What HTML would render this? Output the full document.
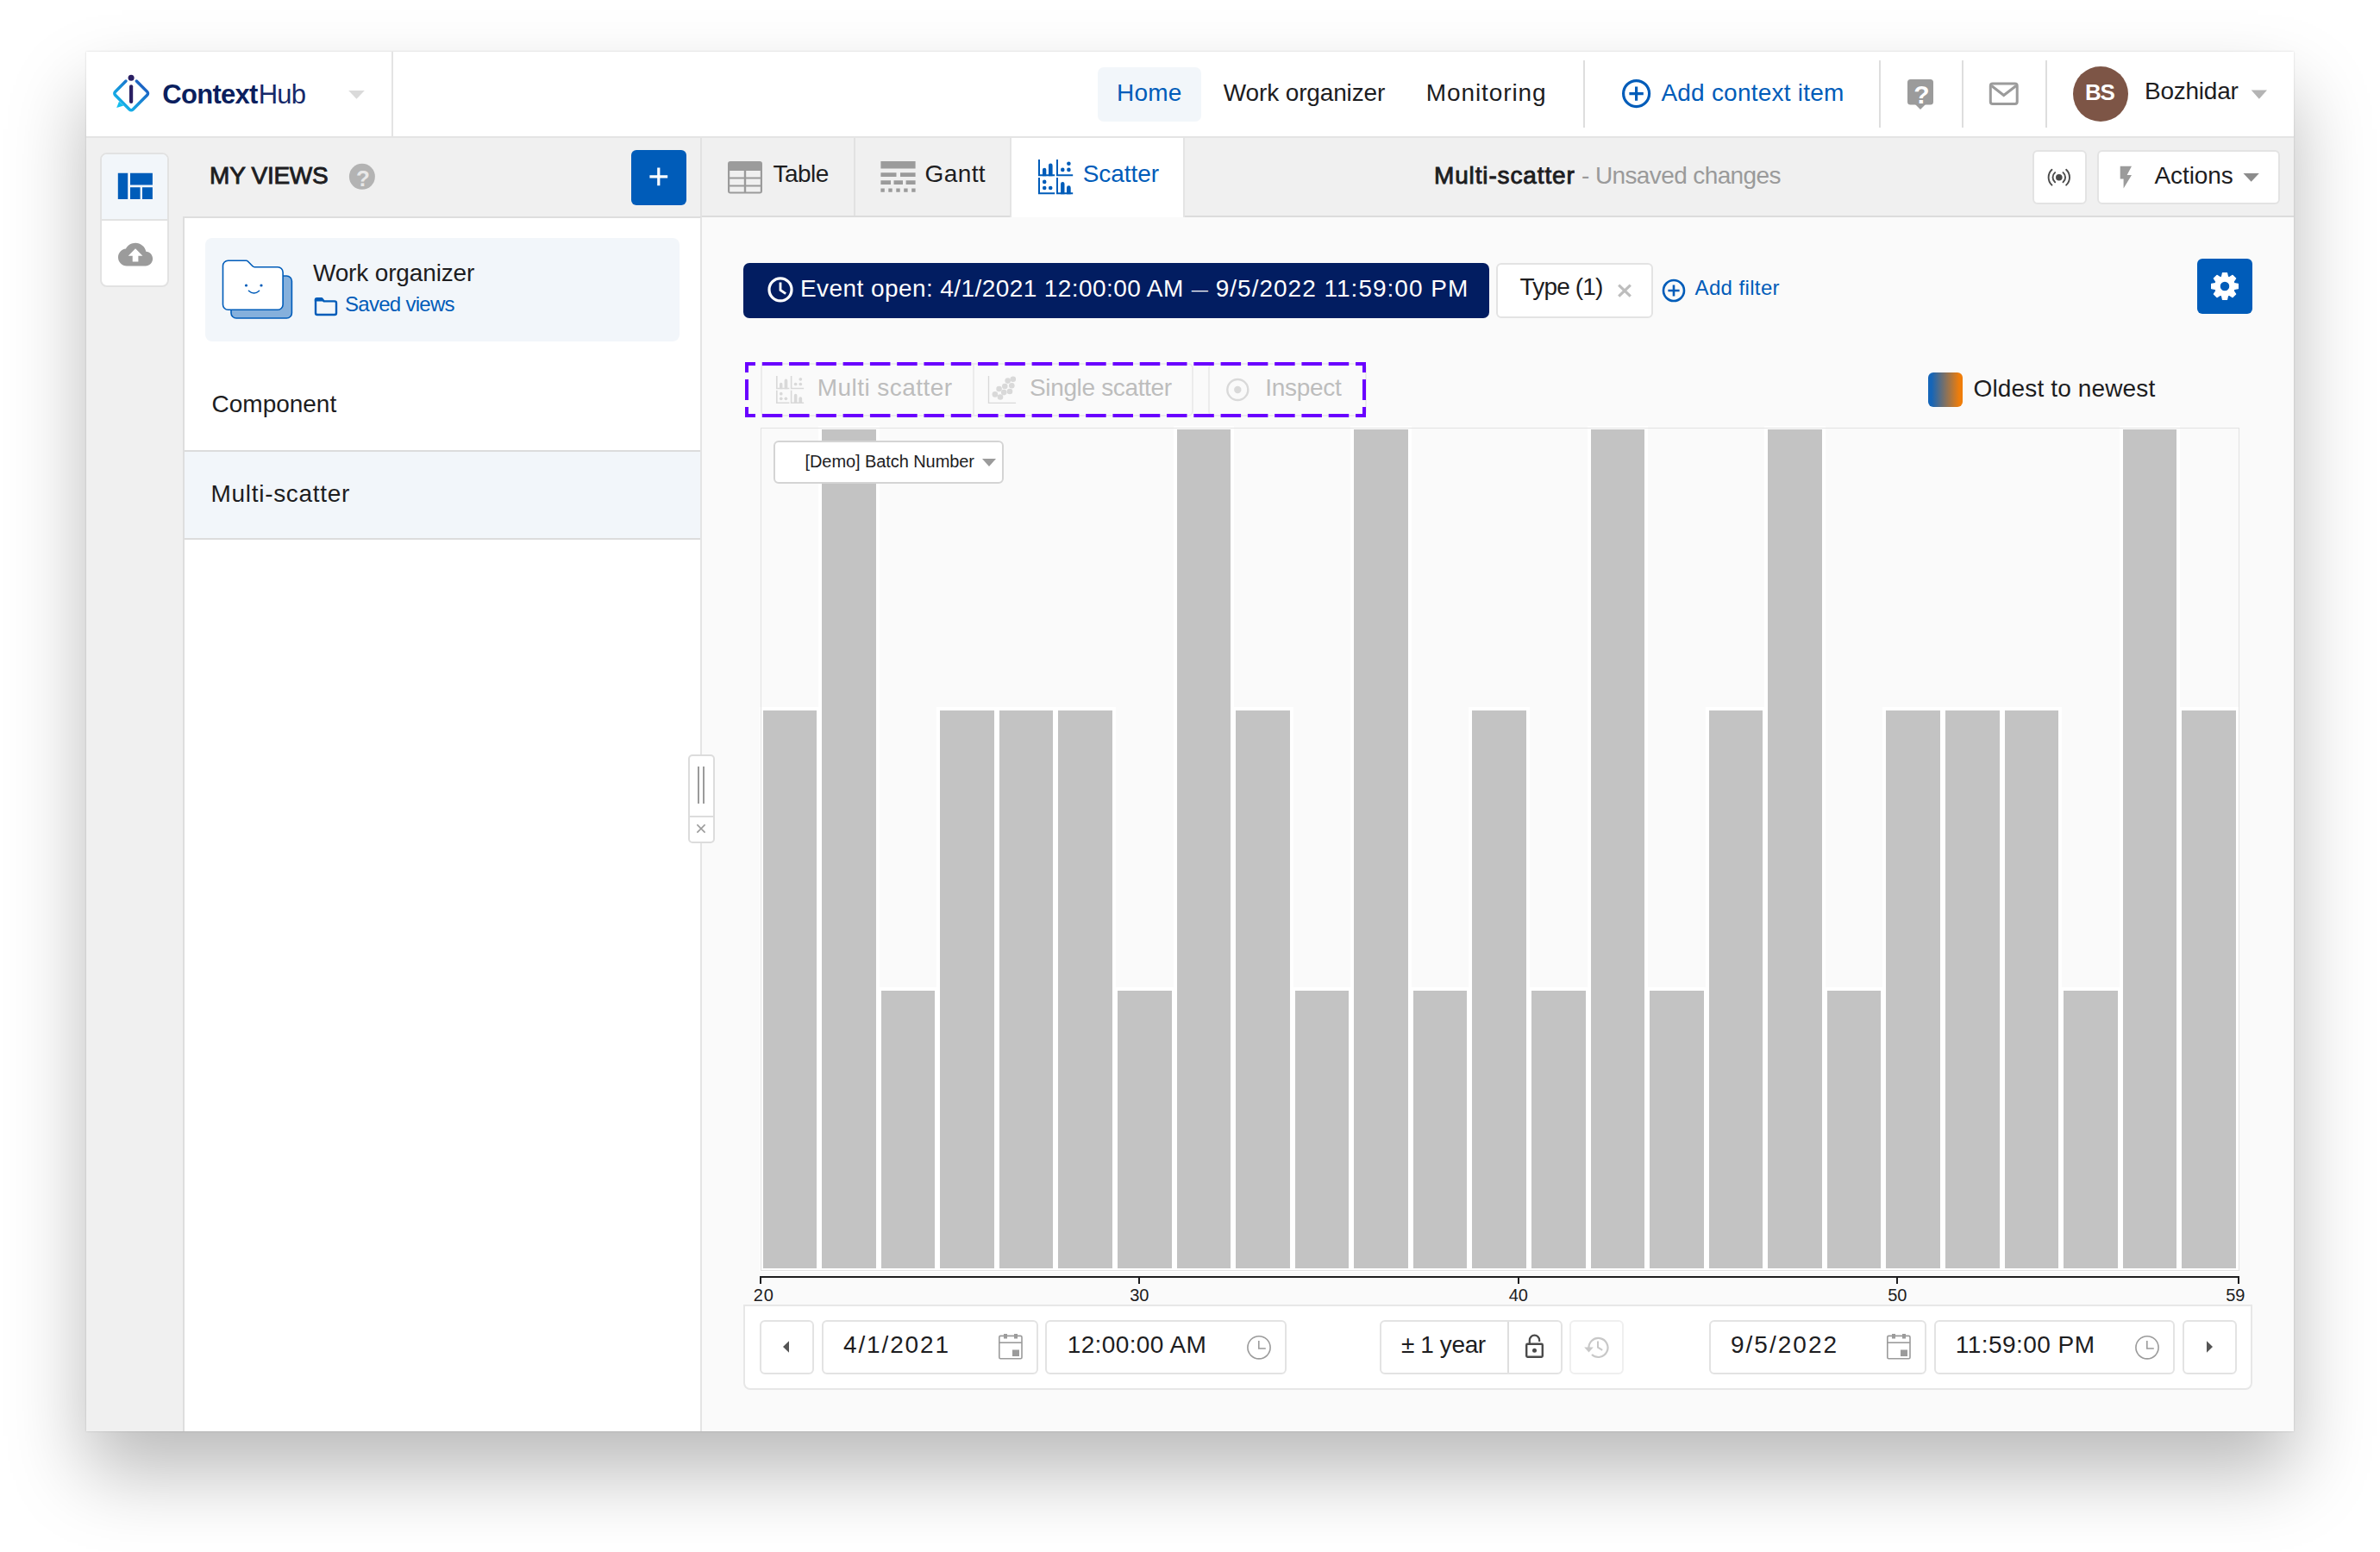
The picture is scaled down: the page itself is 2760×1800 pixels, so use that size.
<!DOCTYPE html>
<html lang="en"><head><meta charset="utf-8"><title>ContextHub - Multi-scatter</title>
<style>
html,body{margin:0;padding:0}
body{width:2760px;height:1800px;position:relative;overflow:hidden;background:#fff;font-family:"Liberation Sans",sans-serif;color:#1d1d1f}
.t{position:absolute;white-space:nowrap;line-height:1;z-index:5}
.a{position:absolute;box-sizing:border-box}
svg{position:absolute;overflow:visible}
.win{left:100px;top:60px;width:2560px;height:1600px;background:#f0f0f0;box-shadow:0 48px 84px rgba(0,0,0,.27),0 0 2px rgba(0,0,0,.16)}
.vd{width:2px;background:#dedede}
.btn{background:#fff;border:2px solid #e3e3e3;border-radius:6px}
.bar{background:#c3c3c3;outline:4px solid #fff}

</style></head>
<body>
<div class="a win"></div>
<!-- header -->
<div class="a" style="left:100px;top:60px;width:2560px;height:98px;background:#fff"></div>
<div class="a" style="left:100px;top:158px;width:2560px;height:2px;background:#e4e4e4"></div>
<div class="a vd" style="left:454px;top:60px;height:98px;background:#e4e4e4"></div>
<div class="a" style="left:1273px;top:78px;width:120px;height:63px;background:#f2f6fa;border-radius:7px"></div>
<div class="a vd" style="left:1836px;top:70px;height:78px"></div>
<div class="a vd" style="left:2179px;top:70px;height:78px"></div>
<div class="a vd" style="left:2275px;top:70px;height:78px"></div>
<div class="a vd" style="left:2372px;top:70px;height:78px"></div>
<div class="a" style="left:2404px;top:77px;width:64px;height:64px;border-radius:50%;background:#7d5546"></div>
<!-- toolbar row -->
<div class="a" style="left:812px;top:250px;width:1848px;height:2px;background:#dcdcdc"></div>
<div class="a vd" style="left:812px;top:160px;height:92px;background:#e2e2e2"></div>
<div class="a vd" style="left:990px;top:160px;height:90px;background:#e2e2e2"></div>
<div class="a" style="left:1171px;top:160px;width:203.4px;height:92px;background:#fff;border-left:2px solid #e4e4e4;border-right:2px solid #e4e4e4"></div>
<div class="a btn" style="left:2357px;top:174px;width:63px;height:63px"></div>
<div class="a btn" style="left:2432px;top:174px;width:212px;height:63px"></div>
<!-- icon rail -->
<div class="a" style="left:116px;top:177px;width:80px;height:156px;background:#fff;border:2px solid #e2e2e2;border-radius:8px;overflow:hidden"><div style="height:75px;background:#f2f6fa;border-bottom:2px solid #e2e2e2"></div></div>
<!-- left panel -->
<div class="a" style="left:212px;top:250.5px;width:602px;height:1409.5px;background:#fff;border-left:2px solid #dedede;border-top:2px solid #dedede;border-right:2px solid #e4e4e4"></div>
<div class="a" style="left:732px;top:173.5px;width:64px;height:64px;background:#005cb9;border-radius:6px"></div>
<div class="a" style="left:238px;top:276px;width:550px;height:120px;background:#f2f6fa;border-radius:8px"></div>
<div class="a" style="left:214px;top:522px;width:598px;height:104px;background:#f2f6fa;border-top:2px solid #dcdcdc;border-bottom:2px solid #dcdcdc"></div>
<!-- main area -->
<div class="a" style="left:814px;top:252px;width:1846px;height:1408px;background:#fafafa"></div>
<div class="a" style="left:862px;top:305px;width:865px;height:64px;background:#021d61;border-radius:7px"></div>
<div class="a btn" style="left:1735px;top:305px;width:182px;height:64px"></div>
<div class="a" style="left:2548px;top:300px;width:64px;height:64px;background:#005cb9;border-radius:6px"></div>
<div class="a" style="left:2236px;top:432px;width:40px;height:40px;border-radius:6px;background:linear-gradient(90deg,#1565b8 10%,#ef7d0a 90%)"></div>
<!-- mode buttons (disabled) -->
<div class="a" style="left:882px;top:421px;width:502px;height:62px;border:2px solid #ececec;border-radius:6px;background:#fafafa"></div>
<div class="a vd" style="left:1128px;top:421px;height:62px;background:#ececec"></div>
<div class="a" style="left:1400.5px;top:421px;width:184px;height:62px;border:2px solid #ececec;border-radius:6px"></div>
<svg style="left:860px;top:416px" width="728" height="72" viewBox="860 416 728 72"><g stroke="#6a00ff" stroke-width="4" fill="none"><path d="M864 422H1584M864 482H1584" stroke-dasharray="23.5 7.783" stroke-dashoffset="11.5"/><path d="M866 420V484M1582 420V484" stroke-dasharray="24 8" stroke-dashoffset="12"/></g></svg>
<!-- chart -->
<div class="a bar" style="left:884.5px;top:823.5px;width:62.6px;height:647.1px"></div>
<div class="a bar" style="left:953.1px;top:498.3px;width:62.6px;height:972.3px"></div>
<div class="a bar" style="left:1021.6px;top:1149.0px;width:62.6px;height:321.6px"></div>
<div class="a bar" style="left:1090.2px;top:823.5px;width:62.6px;height:647.1px"></div>
<div class="a bar" style="left:1158.8px;top:823.5px;width:62.6px;height:647.1px"></div>
<div class="a bar" style="left:1227.4px;top:823.5px;width:62.6px;height:647.1px"></div>
<div class="a bar" style="left:1296.0px;top:1149.0px;width:62.6px;height:321.6px"></div>
<div class="a bar" style="left:1364.5px;top:498.3px;width:62.6px;height:972.3px"></div>
<div class="a bar" style="left:1433.1px;top:823.5px;width:62.6px;height:647.1px"></div>
<div class="a bar" style="left:1501.7px;top:1149.0px;width:62.6px;height:321.6px"></div>
<div class="a bar" style="left:1570.2px;top:498.3px;width:62.6px;height:972.3px"></div>
<div class="a bar" style="left:1638.8px;top:1149.0px;width:62.6px;height:321.6px"></div>
<div class="a bar" style="left:1707.4px;top:823.5px;width:62.6px;height:647.1px"></div>
<div class="a bar" style="left:1776.0px;top:1149.0px;width:62.6px;height:321.6px"></div>
<div class="a bar" style="left:1844.6px;top:498.3px;width:62.6px;height:972.3px"></div>
<div class="a bar" style="left:1913.1px;top:1149.0px;width:62.6px;height:321.6px"></div>
<div class="a bar" style="left:1981.7px;top:823.5px;width:62.6px;height:647.1px"></div>
<div class="a bar" style="left:2050.3px;top:498.3px;width:62.6px;height:972.3px"></div>
<div class="a bar" style="left:2118.9px;top:1149.0px;width:62.6px;height:321.6px"></div>
<div class="a bar" style="left:2187.4px;top:823.5px;width:62.6px;height:647.1px"></div>
<div class="a bar" style="left:2256.0px;top:823.5px;width:62.6px;height:647.1px"></div>
<div class="a bar" style="left:2324.6px;top:823.5px;width:62.6px;height:647.1px"></div>
<div class="a bar" style="left:2393.2px;top:1149.0px;width:62.6px;height:321.6px"></div>
<div class="a bar" style="left:2461.7px;top:498.3px;width:62.6px;height:972.3px"></div>
<div class="a bar" style="left:2530.3px;top:823.5px;width:62.6px;height:647.1px"></div>
<div class="a" style="left:880.7px;top:1480px;width:2.2px;height:8.5px;background:#1d1d1f"></div>
<div class="a" style="left:1320.2px;top:1480px;width:2.2px;height:8.5px;background:#1d1d1f"></div>
<div class="a" style="left:1759.7px;top:1480px;width:2.2px;height:8.5px;background:#1d1d1f"></div>
<div class="a" style="left:2199.2px;top:1480px;width:2.2px;height:8.5px;background:#1d1d1f"></div>
<div class="a" style="left:2594.8px;top:1480px;width:2.2px;height:8.5px;background:#1d1d1f"></div>
<div class="a" style="left:882px;top:496px;width:1714.5px;height:977.5px;border:1.6px solid #e2e2e2"></div>
<div class="a" style="left:897px;top:511px;width:267px;height:50px;background:#fff;border:2px solid #d4d4d4;border-radius:6px"></div>
<svg style="left:1139px;top:532px" width="16" height="9"><path d="M0 0h16l-8 9z" fill="#9b9b9b"/></svg>
<div class="a" style="left:880.7px;top:1480px;width:1716.3px;height:2.2px;background:#1d1d1f"></div>
<!-- time bar -->
<div class="a btn" style="left:862px;top:1513px;width:1750px;height:99px;border-color:#e7e7e7;border-radius:0 0 8px 8px"></div>
<div class="a btn" style="left:881px;top:1531px;width:63px;height:63px"></div>
<div class="a btn" style="left:953px;top:1531px;width:251px;height:63px"></div>
<div class="a btn" style="left:1212px;top:1531px;width:280px;height:63px"></div>
<div class="a btn" style="left:1600px;top:1531px;width:212px;height:63px"></div>
<div class="a vd" style="left:1748px;top:1533px;height:59px"></div>
<div class="a btn" style="left:1820px;top:1531px;width:63px;height:63px;border-color:#efefef"></div>
<div class="a btn" style="left:1982px;top:1531px;width:252px;height:63px"></div>
<div class="a btn" style="left:2243px;top:1531px;width:279px;height:63px"></div>
<div class="a btn" style="left:2531px;top:1531px;width:63px;height:63px"></div>
<!-- resize handle -->
<div class="a" style="left:798px;top:875px;width:31px;height:103px;background:#fff;border:2px solid #dcdcdc;border-radius:5px"></div>
<div class="a" style="left:800px;top:946px;width:27px;height:2px;background:#dcdcdc"></div>
<div class="a" style="left:809px;top:889px;width:2px;height:43px;background:#9b9b9b"></div>
<div class="a" style="left:815px;top:889px;width:2px;height:43px;background:#9b9b9b"></div>
<svg style="left:126px;top:82px" width="52" height="52" viewBox="126 82 52 52"><defs><linearGradient id="lg" x1="0" y1="1" x2="1" y2="0"><stop offset="0.1" stop-color="#14bdee"/><stop offset="0.9" stop-color="#1c5cc0"/></linearGradient></defs>
<path d="M146 94 L133.6 106.4 a2.8 2.8 0 0 0 0 3.9 L150.2 126.9 a2.8 2.8 0 0 0 3.9 0 L170.7 110.3 a2.8 2.8 0 0 0 0 -3.9 L158.3 94" stroke="url(#lg)" stroke-width="3.5" fill="none" stroke-linecap="round"/>
<path d="M138 117.8 L135.2 124.9 L143.4 122.6z" fill="#14bdee"/>
<circle cx="152.1" cy="90.2" r="3.5" fill="#2a1f63"/>
<path d="M152.1 100.3V118" stroke="#2a1f63" stroke-width="4.2" stroke-linecap="round"/></svg>
<svg style="left:404px;top:105px" width="19" height="10" viewBox="404 105 19 10"><path d="M404.2 105h18.6l-9.3 9.8z" fill="#dadada"/></svg>
<svg style="left:1880px;top:91px" width="36" height="36" viewBox="1880 91 36 36"><circle cx="1897.6" cy="108.6" r="15" fill="none" stroke="#005cb9" stroke-width="3.2"/><path d="M1889.4 108.6h16.4M1897.6 100.4v16.4" stroke="#005cb9" stroke-width="3.2"/></svg>
<svg style="left:2210px;top:90px" width="34" height="40" viewBox="2210 90 34 40"><rect x="2212" y="92" width="30" height="29.5" rx="3.5" fill="#9b9b9b"/><path d="M2221 121h12l-6 6z" fill="#9b9b9b"/></svg>
<svg style="left:2305px;top:94px" width="38" height="30" viewBox="2305 94 38 30"><rect x="2308.3" y="97.1" width="30.9" height="23.3" rx="2.5" fill="none" stroke="#9b9b9b" stroke-width="3"/><path d="M2309.5 99.5L2323.7 110.5L2338 99.5" fill="none" stroke="#9b9b9b" stroke-width="3"/></svg>
<svg style="left:2610px;top:104px" width="20" height="11" viewBox="2610 104 20 11"><path d="M2610.7 104.6h18.3l-9.15 10.2z" fill="#b4b4b4"/></svg>
<svg style="left:136px;top:200px" width="42" height="32" viewBox="136 200 42 32"><path d="M136.8 200.8h11.4v30.2h-11.4zM151 200.8h25.9v13.6h-25.9zM151 217.2h11.6v13.8h-11.6zM165 217.2h11.9v13.8h-11.9z" fill="#005cb9"/></svg>
<svg style="left:136.8px;top:274.7px" width="40.1" height="40.1" viewBox="0 0 24 24"><path d="M19.35 10.04C18.67 6.59 15.64 4 12 4 9.11 4 6.6 5.64 5.35 8.04 2.34 8.36 0 10.91 0 14c0 3.31 2.69 6 6 6h13c2.76 0 5-2.24 5-5 0-2.64-2.05-4.78-4.65-4.96zM14 13v4h-4v-4H7l5-5 5 5h-3z" fill="#9b9b9b"/></svg>
<svg style="left:404px;top:189px" width="32" height="32" viewBox="404 189 32 32"><circle cx="419.9" cy="204.8" r="15" fill="#b3b3b3"/></svg>
<svg style="left:750px;top:191px" width="28" height="28" viewBox="750 191 28 28"><path d="M753.4 204.9h20.8M763.8 194.5v20.8" stroke="#fff" stroke-width="3.2"/></svg>
<svg style="left:844px;top:187px" width="40" height="38" viewBox="844 187 40 38"><rect x="844" y="187" width="40" height="37.5" rx="3" fill="#9b9b9b"/><path d="M846.2 198h16.6v7.4h-16.6zM865.2 198h16.6v7.4h-16.6zM846.2 207.4h16.6v7.2h-16.6zM865.2 207.4h16.6v7.2h-16.6zM846.2 216.6h16.6v5.8h-16.6zM865.2 216.6h16.6v5.8h-16.6z" fill="#f0f0f0"/></svg>
<svg style="left:1021px;top:186px" width="41" height="38" viewBox="1021 186 41 38"><path d="M1021.4 186.9h40.2v8.7h-40.2zM1021.4 200.3h18.1v4.7h-18.1zM1044 200.3h17.6v4.7h-17.6zM1021.4 209.2h11.6v4.8h-11.6zM1036.5 209.2h10.5v4.8h-10.5zM1050.6 209.2h11v4.8h-11zM1021.4 218.4h4.4v4.3h-4.4zM1030.3 218.4h4.4v4.3h-4.4zM1039.3 218.4h4.4v4.3h-4.4zM1048.2 218.4h4.4v4.3h-4.4zM1057.2 218.4h4.4v4.3h-4.4z" fill="#9b9b9b"/></svg>
<svg style="left:1204px;top:184.8px" width="40" height="40.3" viewBox="0 0 40 40.3"><g fill="#005cb9" stroke="none"><path d="M0 0h2v17.2h17.2v2h-19.2z"/><path d="M21 0h2v17.2h17.2v2h-19.2z"/><path d="M0 21h2v17.2h17.2v2h-19.2z"/><path d="M21 21h2v17.2h17.2v2h-19.2z"/><path d="M5 19.2v-7.4a2.15 2.15 0 0 1 4.3 0v7.4zM12 19.2v-12.4a2.3 2.3 0 0 1 4.6 0v12.4z"/><circle cx="35.4" cy="4.8" r="2.3"/><circle cx="28.3" cy="11.9" r="2.3"/><circle cx="35.4" cy="11.9" r="2.3"/><circle cx="7.2" cy="25.9" r="2.3"/><circle cx="7.2" cy="33" r="2.3"/><circle cx="14.2" cy="33" r="2.3"/><path d="M26.1 40.2v-12.1a2.2 2.2 0 0 1 4.4 0v12.1zM33 40.2v-7.5a2.35 2.35 0 0 1 4.7 0v7.5z"/></g></svg>
<svg style="left:2372px;top:190px" width="32" height="32" viewBox="2372 190 32 32"><circle cx="2387.8" cy="205.7" r="3.8" fill="#4a4a4a"/><path d="M2392.49 200.11A7.3 7.3 0 0 1 2392.49 211.29M2383.11 211.29A7.3 7.3 0 0 1 2383.11 200.11M2396.12 196.78A12.2 12.2 0 0 1 2396.12 214.62M2379.48 214.62A12.2 12.2 0 0 1 2379.48 196.78" fill="none" stroke="#4a4a4a" stroke-width="1.9" stroke-linecap="round"/></svg>
<svg style="left:2458px;top:192px" width="15" height="27" viewBox="2458 192 15 27"><path d="M2458.7 192.7h13.3l-5.4 10.3h5.4l-9.4 15.5v-10.9h-3.9z" fill="#9b9b9b"/></svg>
<svg style="left:2601px;top:200px" width="20" height="11" viewBox="2601 200 20 11"><path d="M2601.5 200.9h18.3l-9.15 9.8z" fill="#8c8c8c"/></svg>
<svg style="left:256px;top:300px" width="86" height="72" viewBox="256 300 86 72"><path d="M274 320h58.4a6 6 0 0 1 6 6v37a6 6 0 0 1 -6 6h-58.4a6 6 0 0 1 -6 -6v-37a6 6 0 0 1 6 -6z" fill="#85b0dc" stroke="#005cb9" stroke-width="1.6"/>
<path d="M264.5 302.3h21a3 3 0 0 1 2.1 .9l5.4 5.6a3 3 0 0 0 2.1 .9h27a6 6 0 0 1 6 6v37.5a6 6 0 0 1 -6 6h-57.6a6 6 0 0 1 -6 -6v-45a6 6 0 0 1 6 -6z" fill="#fff" stroke="#005cb9" stroke-width="1.6"/>
<circle cx="285.5" cy="331" r="1.6" fill="#005cb9"/><circle cx="303" cy="331" r="1.6" fill="#005cb9"/>
<path d="M288.4 337.2q6.1 5.6 12.2 0" fill="none" stroke="#005cb9" stroke-width="1.5" stroke-linecap="round"/></svg>
<svg style="left:364px;top:344px" width="28" height="23" viewBox="364 344 28 23"><path d="M366 349.8v13.2a2 2 0 0 0 2 2h20a2 2 0 0 0 2 -2v-11.6a2 2 0 0 0 -2 -2h-12.2l-2.6-3.2h-6a1.6 1.6 0 0 0 -1.4 1.6z" fill="none" stroke="#005cb9" stroke-width="2.4" stroke-linejoin="round"/><path d="M365.6 346.2h8l2.4 3.4h-10.4z" fill="#005cb9"/></svg>
<svg style="left:888px;top:319px" width="34" height="34" viewBox="888 319 34 34"><circle cx="905" cy="335.9" r="13" fill="none" stroke="#fff" stroke-width="3.2"/><path d="M905 327.4v9l6.2 4.2" fill="none" stroke="#fff" stroke-width="2.8"/></svg>
<svg style="left:1875px;top:328px" width="18" height="18" viewBox="1875 328 18 18"><path d="M1877.2 330.6l13.6 13M1890.8 330.6l-13.6 13" stroke="#bdbdbd" stroke-width="3.2"/></svg>
<svg style="left:1926px;top:322px" width="30" height="30" viewBox="1926 322 30 30"><circle cx="1941" cy="337" r="12" fill="none" stroke="#005cb9" stroke-width="2.6"/><path d="M1934.4 337h13.2M1941 330.4v13.2" stroke="#005cb9" stroke-width="2.6"/></svg>
<svg style="left:2562px;top:314px" width="36" height="36" viewBox="2562 314 36 36"><path d="M2576.52 321.14L2577.44 316.61L2582.56 316.61L2583.48 321.14L2585.22 321.86L2589.07 319.31L2592.69 322.93L2590.14 326.78L2590.86 328.52L2595.39 329.44L2595.39 334.56L2590.86 335.48L2590.14 337.22L2592.69 341.07L2589.07 344.69L2585.22 342.14L2583.48 342.86L2582.56 347.39L2577.44 347.39L2576.52 342.86L2574.78 342.14L2570.93 344.69L2567.31 341.07L2569.86 337.22L2569.14 335.48L2564.61 334.56L2564.61 329.44L2569.14 328.52L2569.86 326.78L2567.31 322.93L2570.93 319.31L2574.78 321.86zM2574.1 332a5.9 5.9 0 1 0 11.8 0a5.9 5.9 0 1 0 -11.8 0z" fill="#fff" fill-rule="evenodd" stroke="#fff" stroke-width="1.2" stroke-linejoin="round"/></svg>
<svg style="left:900px;top:436px" width="32" height="32.2" viewBox="0 0 40 40.3"><g fill="#d9d9d9" stroke="none"><path d="M0 0h2v17.2h17.2v2h-19.2z"/><path d="M21 0h2v17.2h17.2v2h-19.2z"/><path d="M0 21h2v17.2h17.2v2h-19.2z"/><path d="M21 21h2v17.2h17.2v2h-19.2z"/><path d="M5 19.2v-7.4a2.15 2.15 0 0 1 4.3 0v7.4zM12 19.2v-12.4a2.3 2.3 0 0 1 4.6 0v12.4z"/><circle cx="35.4" cy="4.8" r="2.3"/><circle cx="28.3" cy="11.9" r="2.3"/><circle cx="35.4" cy="11.9" r="2.3"/><circle cx="7.2" cy="25.9" r="2.3"/><circle cx="7.2" cy="33" r="2.3"/><circle cx="14.2" cy="33" r="2.3"/><path d="M26.1 40.2v-12.1a2.2 2.2 0 0 1 4.4 0v12.1zM33 40.2v-7.5a2.35 2.35 0 0 1 4.7 0v7.5z"/></g></svg>
<svg style="left:1145px;top:435px" width="35" height="34" viewBox="1145 435 35 34"><path d="M1146.5 436v31.4h31.6" fill="none" stroke="#d9d9d9" stroke-width="1.4"/><circle cx="1174.8" cy="439.7" r="3.3" fill="#d9d9d9"/><circle cx="1168.7" cy="441.6" r="3.3" fill="#d9d9d9"/><circle cx="1173.3" cy="447.2" r="3.3" fill="#d9d9d9"/><circle cx="1165.3" cy="448" r="3.3" fill="#d9d9d9"/><circle cx="1158.6" cy="451" r="3.3" fill="#d9d9d9"/><circle cx="1171" cy="454" r="3.3" fill="#d9d9d9"/><circle cx="1164.2" cy="455.1" r="3.3" fill="#d9d9d9"/><circle cx="1153.9" cy="457.4" r="3.3" fill="#d9d9d9"/><circle cx="1160" cy="460.5" r="3.3" fill="#d9d9d9"/></svg>
<svg style="left:1420px;top:437px" width="30" height="30" viewBox="1420 437 30 30"><circle cx="1435.3" cy="452" r="12" fill="none" stroke="#d9d9d9" stroke-width="2.4"/><circle cx="1435.3" cy="452" r="4.2" fill="#d9d9d9"/></svg>
<svg style="left:907px;top:1555px" width="9" height="14" viewBox="907 1555 9 14"><path d="M915 1555.3v13.5l-7-6.75z" fill="#555"/></svg>
<svg style="left:2558px;top:1555px" width="9" height="14" viewBox="2558 1555 9 14"><path d="M2559 1555.3v13.5l7-6.75z" fill="#555"/></svg>
<svg style="left:1157px;top:1546px" width="30" height="32" viewBox="1157 1546 30 32"><rect x="1158.8" y="1549.4" width="26.2" height="26.4" rx="1.5" fill="none" stroke="#9b9b9b" stroke-width="1.6"/><path d="M1158.8 1557.2h26.2" stroke="#9b9b9b" stroke-width="1.6"/><path d="M1164 1547h4v5.6h-4zM1176 1547h4v5.6h-4zM1174 1565.5h8v7.4h-8z" fill="#9b9b9b"/></svg>
<svg style="left:2186.8px;top:1546px" width="30" height="32" viewBox="2186.8 1546 30 32"><rect x="2188.6000000000004" y="1549.4" width="26.2" height="26.4" rx="1.5" fill="none" stroke="#9b9b9b" stroke-width="1.6"/><path d="M2188.6000000000004 1557.2h26.2" stroke="#9b9b9b" stroke-width="1.6"/><path d="M2193.8 1547h4v5.6h-4zM2205.8 1547h4v5.6h-4zM2203.8 1565.5h8v7.4h-8z" fill="#9b9b9b"/></svg>
<svg style="left:1445px;top:1548px" width="30" height="30" viewBox="1445 1548 30 30"><circle cx="1460" cy="1562.8" r="13.1" fill="none" stroke="#9b9b9b" stroke-width="1.6"/><path d="M1459.8 1555v9h8" fill="none" stroke="#9b9b9b" stroke-width="1.6"/></svg>
<svg style="left:2474.7px;top:1548px" width="30" height="30" viewBox="2474.7 1548 30 30"><circle cx="2489.7" cy="1562.8" r="13.1" fill="none" stroke="#9b9b9b" stroke-width="1.6"/><path d="M2489.5 1555v9h8" fill="none" stroke="#9b9b9b" stroke-width="1.6"/></svg>
<svg style="left:1766px;top:1545px" width="28" height="32" viewBox="1766 1545 28 32"><rect x="1770.2" y="1558.8" width="18.6" height="15" rx="1.2" fill="none" stroke="#4a4a4a" stroke-width="2.4"/><path d="M1773.8 1558.6v-4.2a5.7 5.7 0 0 1 11.4 0v1.6" fill="none" stroke="#4a4a4a" stroke-width="2.2"/><circle cx="1779.5" cy="1566.2" r="2.5" fill="#4a4a4a"/></svg>
<svg style="left:1836px;top:1548px" width="32" height="30" viewBox="1836 1548 32 30"><path d="M1842.6 1564.4a11 11 0 1 1 3.4 6.6" fill="none" stroke="#c8c8c8" stroke-width="2.2"/><path d="M1837.2 1562.6h10.6l-5.3 6z" fill="#c8c8c8"/><path d="M1853 1555.6v7l5.2 3.2" fill="none" stroke="#c8c8c8" stroke-width="2"/></svg>
<svg style="left:807px;top:955px" width="12" height="12" viewBox="807 955 12 12"><path d="M808.4 956.4l9.2 9.2M817.6 956.4l-9.2 9.2" stroke="#9b9b9b" stroke-width="1.5"/></svg>
<span class="t" style="left:188.3px;top:93.5px;font-size:31px;font-weight:700;color:#0b1f5e;letter-spacing:-0.727px;">Context</span>
<span class="t" style="left:299.8px;top:93.5px;font-size:31px;font-weight:400;color:#16296a;letter-spacing:-0.814px;">Hub</span>
<span class="t" style="left:1295.0px;top:93.6px;font-size:28px;font-weight:400;color:#005cb9;letter-spacing:0.194px;">Home</span>
<span class="t" style="left:1418.8px;top:93.6px;font-size:28px;font-weight:400;color:#1d1d1f;letter-spacing:-0.139px;">Work organizer</span>
<span class="t" style="left:1653.8px;top:93.6px;font-size:28px;font-weight:400;color:#1d1d1f;letter-spacing:0.894px;">Monitoring</span>
<span class="t" style="left:1926.4px;top:94.0px;font-size:28px;font-weight:400;color:#005cb9;letter-spacing:0.225px;">Add context item</span>
<span class="t" style="left:2219.3px;top:94.5px;font-size:30px;font-weight:700;color:#fff;letter-spacing:-1.300px;">?</span>
<span class="t" style="left:412.9px;top:193.6px;font-size:26px;font-weight:700;color:#e8e8e8;letter-spacing:-2.400px;">?</span>
<span class="t" style="left:2418.0px;top:93.9px;font-size:26px;font-weight:700;color:#fff;letter-spacing:-1.276px;">BS</span>
<span class="t" style="left:2487.0px;top:92.2px;font-size:28px;font-weight:400;color:#1d1d1f;letter-spacing:-0.241px;">Bozhidar</span>
<span class="t" style="left:243.1px;top:190.3px;font-size:28px;font-weight:400;color:#1d1d1f;letter-spacing:-0.277px;-webkit-text-stroke:0.9px #1d1d1f;">MY VIEWS</span>
<span class="t" style="left:896.5px;top:188.2px;font-size:28px;font-weight:400;color:#1d1d1f;letter-spacing:-0.541px;">Table</span>
<span class="t" style="left:1072.6px;top:188.2px;font-size:28px;font-weight:400;color:#1d1d1f;letter-spacing:0.374px;">Gantt</span>
<span class="t" style="left:1255.7px;top:188.2px;font-size:28px;font-weight:400;color:#005cb9;letter-spacing:-0.046px;">Scatter</span>
<span class="t" style="left:1663.0px;top:189.8px;font-size:28px;font-weight:400;color:#1d1d1f;letter-spacing:0.863px;-webkit-text-stroke:0.9px #1d1d1f;">Multi-scatter</span>
<span class="t" style="left:1834.0px;top:189.8px;font-size:28px;font-weight:400;color:#9a9a9a;letter-spacing:-0.610px;">- Unsaved changes</span>
<span class="t" style="left:2498.4px;top:189.9px;font-size:28px;font-weight:400;color:#1d1d1f;letter-spacing:-0.070px;">Actions</span>
<span class="t" style="left:362.9px;top:303.2px;font-size:28px;font-weight:400;color:#1d1d1f;letter-spacing:-0.146px;">Work organizer</span>
<span class="t" style="left:400.0px;top:341.4px;font-size:24px;font-weight:400;color:#005cb9;letter-spacing:-0.713px;">Saved views</span>
<span class="t" style="left:245.6px;top:455.2px;font-size:28px;font-weight:400;color:#1d1d1f;letter-spacing:-0.022px;">Component</span>
<span class="t" style="left:244.6px;top:558.6px;font-size:28px;font-weight:400;color:#1d1d1f;letter-spacing:0.688px;">Multi-scatter</span>
<span class="t" style="left:928.0px;top:321.0px;font-size:28px;font-weight:400;color:#fff;letter-spacing:0.421px;">Event open: 4/1/2021 12:00:00 AM</span>
<span class="t" style="left:1381.7px;top:326.3px;font-size:19.2px;font-weight:400;color:#fff;letter-spacing:-0.900px;">—</span>
<span class="t" style="left:1409.7px;top:321.0px;font-size:28px;font-weight:400;color:#fff;letter-spacing:1.008px;">9/5/2022 11:59:00 PM</span>
<span class="t" style="left:1762.6px;top:318.8px;font-size:28px;font-weight:400;color:#1d1d1f;letter-spacing:-0.854px;">Type (1)</span>
<span class="t" style="left:1965.5px;top:322.0px;font-size:24px;font-weight:400;color:#005cb9;letter-spacing:0.376px;">Add filter</span>
<span class="t" style="left:2288.6px;top:436.6px;font-size:28px;font-weight:400;color:#1d1d1f;letter-spacing:0.135px;">Oldest to newest</span>
<span class="t" style="left:947.7px;top:436.3px;font-size:28px;font-weight:400;color:#bdbdbd;letter-spacing:0.450px;">Multi scatter</span>
<span class="t" style="left:1194.0px;top:436.3px;font-size:28px;font-weight:400;color:#bdbdbd;letter-spacing:-0.355px;">Single scatter</span>
<span class="t" style="left:1467.2px;top:436.2px;font-size:28px;font-weight:400;color:#bdbdbd;letter-spacing:-0.283px;">Inspect</span>
<span class="t" style="left:933.5px;top:524.8px;font-size:20px;font-weight:400;color:#1d1d1f;letter-spacing:-0.077px;">[Demo] Batch Number</span>
<span class="t" style="left:873.8px;top:1492.0px;font-size:20px;font-weight:400;color:#1d1d1f;letter-spacing:0.877px;">20</span>
<span class="t" style="left:1310.3px;top:1492.0px;font-size:20px;font-weight:400;color:#1d1d1f;letter-spacing:-0.123px;">30</span>
<span class="t" style="left:1749.8px;top:1492.0px;font-size:20px;font-weight:400;color:#1d1d1f;letter-spacing:-0.123px;">40</span>
<span class="t" style="left:2189.3px;top:1492.0px;font-size:20px;font-weight:400;color:#1d1d1f;letter-spacing:-0.123px;">50</span>
<span class="t" style="left:2581.2px;top:1492.0px;font-size:20px;font-weight:400;color:#1d1d1f;letter-spacing:-0.123px;">59</span>
<span class="t" style="left:978.0px;top:1546.2px;font-size:28px;font-weight:400;color:#1d1d1f;letter-spacing:1.869px;">4/1/2021</span>
<span class="t" style="left:1237.7px;top:1546.2px;font-size:28px;font-weight:400;color:#1d1d1f;letter-spacing:0.385px;">12:00:00 AM</span>
<span class="t" style="left:1625.0px;top:1546.2px;font-size:28px;font-weight:400;color:#1d1d1f;letter-spacing:-0.406px;">± 1 year</span>
<span class="t" style="left:2007.0px;top:1546.2px;font-size:28px;font-weight:400;color:#1d1d1f;letter-spacing:2.011px;">9/5/2022</span>
<span class="t" style="left:2267.7px;top:1546.2px;font-size:28px;font-weight:400;color:#1d1d1f;letter-spacing:0.463px;">11:59:00 PM</span>
</body></html>
